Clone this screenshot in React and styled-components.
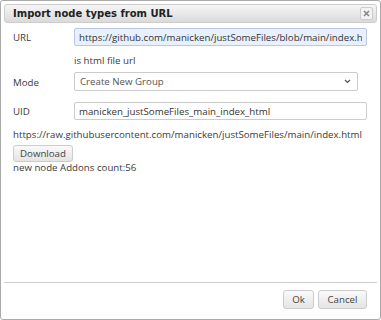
import React from "react";
import styled, { createGlobalStyle } from "styled-components";

const Global = createGlobalStyle`
  html, body { margin: 0; padding: 0; background: #fff; }
  * { box-sizing: border-box; }
`;

const Dialog = styled.div`
  width: 381px;
  height: 320px;
  border: 1px solid #aaa;
  border-radius: 3px;
  padding: 3px 3px 0 3px;
  background: #fff;
  display: flex;
  flex-direction: column;
  font-family: "Open Sans", sans-serif;
  font-size: 9.7px;
  color: #3a3a3a;
`;

const TitleBar = styled.div`
  height: 19px;
  border: 1px solid #ccc;
  border-radius: 3px;
  background: linear-gradient(#f6f6f6, #dadada);
  display: flex;
  align-items: center;
  justify-content: space-between;
  padding: 0 3px 0 8px;
`;

const Title = styled.span`
  font-family: "DejaVu Sans", Verdana, sans-serif;
  font-weight: bold;
  font-size: 10px;
  color: #222;
`;

const Close = styled.button`
  width: 13px;
  height: 13px;
  padding: 0;
  border: 1px solid #ccc;
  border-radius: 2px;
  background: #f2f2f2;
  display: flex;
  align-items: center;
  justify-content: center;
`;

const Body = styled.div`
  flex: 1;
  padding: 5px 9px 0 9px;
  display: flex;
  flex-direction: column;
`;

const Row = styled.div`
  display: grid;
  grid-template-columns: 61px ${(p) => p.$w}px;
  align-items: center;
  margin-top: ${(p) => p.$mt || 0}px;
`;

const Label = styled.label`
  padding-top: 1px;
`;

const Input = styled.input`
  height: 18px;
  width: 100%;
  border: 1px solid ${(p) => (p.$filled ? "#b8c8e0" : "#ccc")};
  border-radius: 2px;
  background: ${(p) => (p.$filled ? "#e8f0fe" : "#fff")};
  font-family: "Open Sans", sans-serif;
  font-size: 9.7px;
  color: #333;
  padding: 0 4px;
  outline: none;
`;

const Select = styled.div`
  height: 19px;
  border: 1px solid #ccc;
  border-radius: 2px;
  display: flex;
  align-items: center;
  justify-content: space-between;
  padding: 0 6px 0 5px;
  color: #555;
`;

const Text = styled.div`
  line-height: ${(p) => p.$lh || 14}px;
  margin-top: ${(p) => p.$mt || 0}px;
  padding-left: ${(p) => p.$indent || 0}px;
`;

const Btn = styled.button`
  height: ${(p) => p.$h || 19}px;
  width: ${(p) => p.$w}px;
  padding: 0;
  border: 1px solid #ccc;
  border-radius: 3px;
  background: linear-gradient(#fafafa, #e4e4e4);
  font-family: "Open Sans", sans-serif;
  font-size: 9.7px;
  color: #444;
  margin-top: ${(p) => p.$mt || 0}px;
`;

const Footer = styled.div`
  border-top: 1px solid #ccc;
  height: 37px;
  display: flex;
  align-items: center;
  justify-content: flex-end;
  gap: 4px;
  padding: 0 10px 3px 0;
`;

export default function App() {
  return (
    <>
      <Global />
      <Dialog>
        <TitleBar>
          <Title>Import node types from URL</Title>
          <Close aria-label="close">
            <svg width="7" height="7" viewBox="0 0 7 7">
              <path d="M1 1L6 6M6 1L1 6" stroke="#888" strokeWidth="1.6" />
            </svg>
          </Close>
        </TitleBar>
        <Body>
          <Row $w={293}>
            <Label>URL</Label>
            <Input
              $filled
              readOnly
              value="https://github.com/manicken/justSomeFiles/blob/main/index.html"
            />
          </Row>
          <Text $mt={8} $indent={61}>is html file url</Text>
          <Row $w={284} $mt={4}>
            <Label>Mode</Label>
            <Select>
              <span>Create New Group</span>
              <svg width="7" height="5" viewBox="0 0 7 5">
                <path d="M1 1L3.5 3.5L6 1" stroke="#555" strokeWidth="1.2" fill="none" />
              </svg>
            </Select>
          </Row>
          <Row $w={293} $mt={11}>
            <Label>UID</Label>
            <Input readOnly value="manicken_justSomeFiles_main_index_html" />
          </Row>
          <Text $mt={8}>
            https://raw.githubusercontent.com/manicken/justSomeFiles/main/index.html
          </Text>
          <div>
            <Btn $w={60} $h={17} $mt={3}>Download</Btn>
          </div>
          <Text $lh={12}>new node Addons count:56</Text>
        </Body>
        <Footer>
          <Btn $w={31}>Ok</Btn>
          <Btn $w={49}>Cancel</Btn>
        </Footer>
      </Dialog>
    </>
  );
}
